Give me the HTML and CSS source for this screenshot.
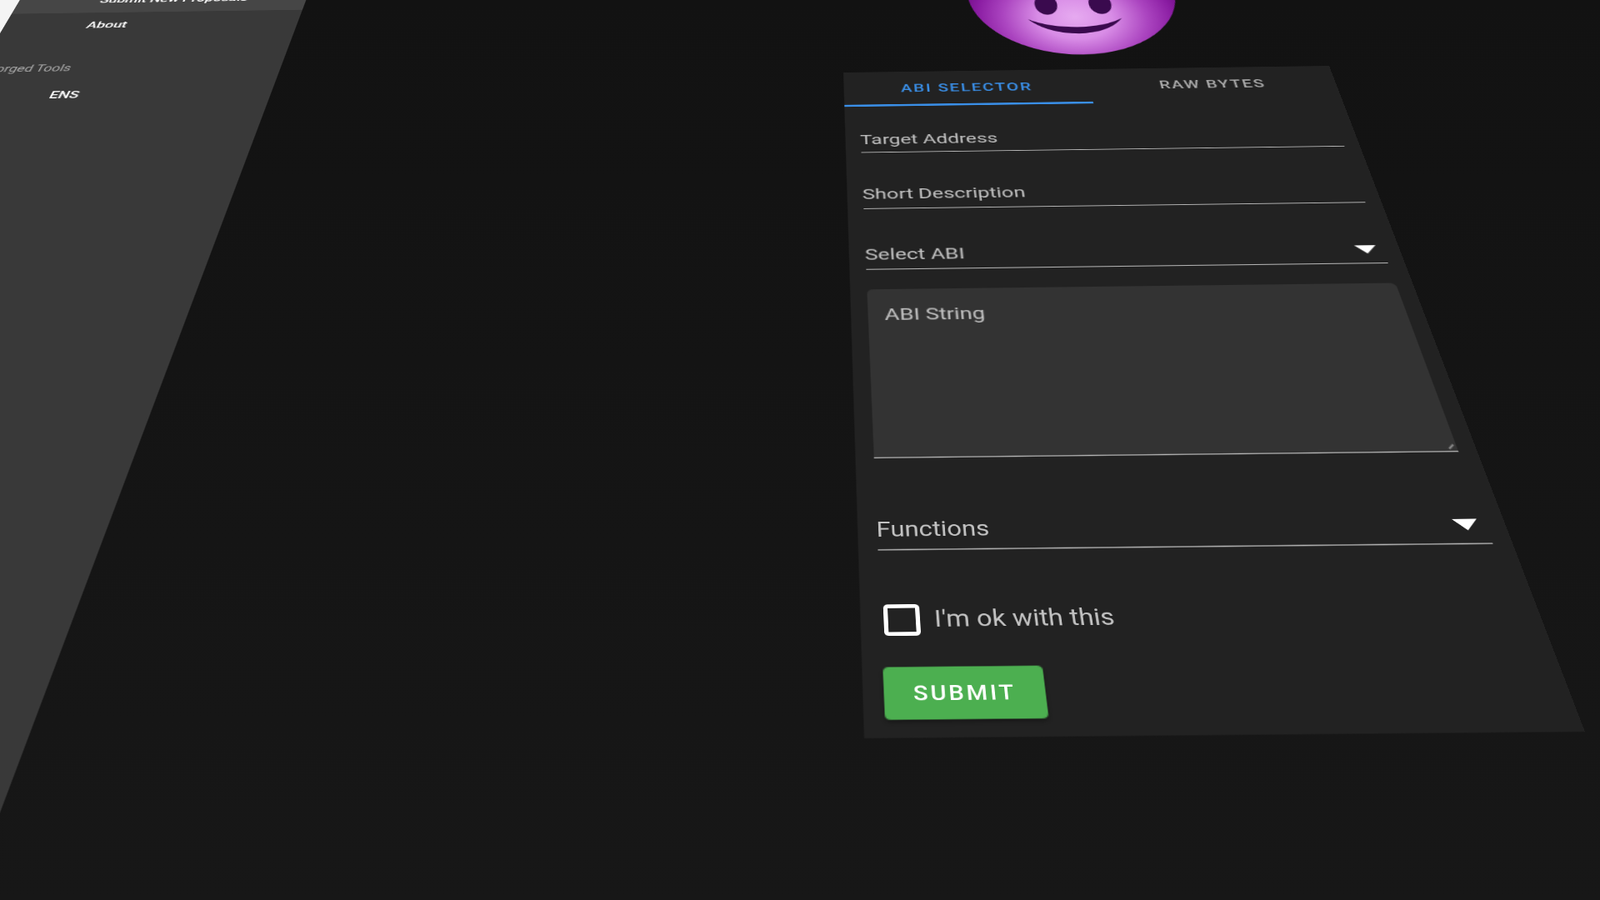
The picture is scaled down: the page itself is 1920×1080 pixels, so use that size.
FILE: index.html
```html
<!DOCTYPE html>
<html lang="en">
<head>
    <meta charset="UTF-8">
    <meta name="viewport" content="width=device-width, initial-scale=1.0">
    <title>New Proposal</title>
    <link rel="stylesheet" href="styles.css">
</head>
<body>
    <div class="scene">
        <div class="plane">
            <div class="edge"></div>

            <nav class="sidebar">
                <div class="nav-item nav-item-active">Submit New Proposals</div>
                <div class="nav-item">About</div>
                <div class="nav-header">Forged Tools</div>
                <div class="nav-item">ENS</div>
            </nav>

            <main class="main">
                <svg class="face" viewBox="0 0 205 205">
                    <defs>
                        <radialGradient id="faceFill" gradientUnits="userSpaceOnUse" cx="102" cy="145" r="112">
                            <stop offset="0" stop-color="#e6aaf0"/>
                            <stop offset="0.32" stop-color="#d88ce6"/>
                            <stop offset="0.62" stop-color="#ab45c0"/>
                            <stop offset="0.85" stop-color="#8a1ca2"/>
                            <stop offset="1" stop-color="#6e0c84"/>
                        </radialGradient>
                    </defs>
                    <circle cx="102.5" cy="102.5" r="102.5" fill="url(#faceFill)"/>
                    <ellipse cx="76" cy="124" rx="11" ry="17" fill="#3a0a4e"/>
                    <ellipse cx="129" cy="124" rx="11" ry="17" fill="#3a0a4e"/>
                    <path d="M56 148 C80 166 125 166 147 148 C128 180 78 180 56 148 Z" fill="#3a0a4e"/>
                </svg>

                <section class="card">
                    <div class="tabs">
                        <div class="tab tab-active">ABI Selector</div>
                        <div class="tab">Raw Bytes</div>
                    </div>

                    <div class="form">
                        <div class="field field-target">Target Address</div>
                        <div class="field field-desc">Short Description</div>
                        <div class="field field-select">
                            Select ABI
                            <svg class="arrow" viewBox="0 0 18 10"><path d="M0 0 H18 L9 10 Z"/></svg>
                        </div>
                        <div class="abi-box">
                            ABI String
                            <svg class="grip" viewBox="0 0 6 6"><path d="M1 5 L5 1"/></svg>
                        </div>
                        <div class="field field-functions">
                            Functions
                            <svg class="arrow" viewBox="0 0 18 10"><path d="M0 0 H18 L9 10 Z"/></svg>
                        </div>
                        <div class="check-row">
                            <span class="checkbox"></span>
                            <span>I'm ok with this</span>
                        </div>
                        <button type="button" class="submit">Submit</button>
                    </div>
                </section>
            </main>
        </div>
    </div>
</body>
</html>
```

FILE: styles.css
```css
html, body {
    margin: 0;
    height: 100%;
    overflow: hidden;
}

body {
    background: linear-gradient(#121212, #171717);
    font-family: Roboto, "Liberation Sans", sans-serif;
}

.scene {
    filter: blur(0.45px);
}

/* the whole app sits on one tilted plane */
.plane {
    display: flex;
    width: 2400px;
    height: 1500px;
    transform-origin: 0 0;
    transform: matrix3d(1.24258, -0.017757, 0, -0.0000069948,
                        -0.44749, 0.73343, 0, -0.00046608,
                        0, 0, 1, 0,
                        1.08, -73.04, 0, 1.11816);
}

.edge {
    width: 56px;
    height: 160px;
    background-color: #f4f4f4;
}

.sidebar {
    width: 297px;
    padding-top: 82px;
    box-sizing: border-box;
    background-color: #393939;
    flex-shrink: 0;
}

.nav-item {
    height: 43px;
    line-height: 43px;
    padding-left: 84px;
    font-size: 15px;
    font-weight: 500;
    color: #fff;
}

.nav-item-active {
    background-color: #464646;
}

.nav-header {
    height: 30px;
    line-height: 30px;
    margin: 33px 0 6px;
    padding-left: 10px;
    font-size: 14px;
    color: #aaa;
}

.main {
    display: flex;
    flex-direction: column;
    align-items: center;
    width: 465px;
    margin-left: 547px;
    padding-top: 7px;
}

.face {
    display: block;
    width: 210px;
    height: 210px;
    margin-bottom: 23px;
    flex-shrink: 0;
}

.card {
    width: 465px;
    height: 697px;
    background-color: #222;
    flex-shrink: 0;
}

.tabs {
    display: flex;
    height: 52px;
}

.tab {
    flex: 1;
    box-sizing: border-box;
    padding-top: 15px;
    text-align: center;
    font-size: 16.2px;
    line-height: 22px;
    font-weight: 500;
    letter-spacing: 1.4px;
    text-transform: uppercase;
    color: #aaa;
}

.tab-active {
    color: #3a8fe8;
    border-bottom: 3px solid #3a8fe8;
}

.form {
    padding: 0 14px 0 13.5px;
    font-size: 18.6px;
    line-height: 22px;
    color: #c2c2c2;
}

.field {
    display: flex;
    align-items: flex-end;
    justify-content: space-between;
    box-sizing: border-box;
    padding-bottom: 6px;
    border-bottom: 1.8px solid #b5b5b5;
}

.field-target { height: 66px; }
.field-desc { height: 75px; padding-bottom: 7px; }
.field-select { height: 75px; }
.field-functions { height: 83px; }

.arrow {
    width: 18px;
    height: 10px;
    margin: 0 5px 5px 0;
    fill: #fff;
}

.abi-box {
    position: relative;
    box-sizing: border-box;
    height: 177px;
    margin-top: 23px;
    padding: 18px 14px;
    background-color: #333;
    border-radius: 5px 5px 0 0;
    border-bottom: 1.8px solid #b5b5b5;
}

.grip {
    position: absolute;
    right: 1px;
    bottom: 1px;
    width: 6px;
    height: 6px;
    stroke: #999;
    stroke-width: 1.2;
}

.check-row {
    display: flex;
    align-items: center;
    gap: 10px;
    height: 26px;
    margin-top: 44px;
    margin-left: 2.3px;
}

.checkbox {
    width: 25px;
    height: 25px;
    box-sizing: border-box;
    border: 3px solid #fff;
    border-radius: 3px;
}

.submit {
    display: block;
    width: 107px;
    height: 39px;
    margin-top: 24px;
    padding: 0 0 0 1px;
    border: none;
    border-radius: 4px;
    background-color: #4caf50;
    box-shadow: 0 2px 3px rgba(0, 0, 0, 0.3);
    color: #fff;
    font-family: inherit;
    font-size: 16px;
    font-weight: 500;
    letter-spacing: 1.6px;
    text-transform: uppercase;
}
```
